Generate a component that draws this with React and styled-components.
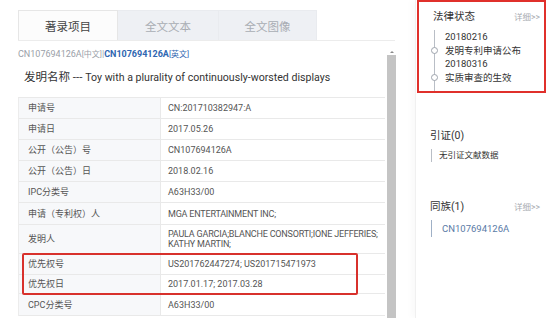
import React from "react"
import styled, { createGlobalStyle } from "styled-components"

const Global = createGlobalStyle`
  html, body {
    margin: 0;
    padding: 0;
    background: #fff;
    font-family: Roboto, "Noto Sans CJK SC", sans-serif;
    color: #555;
  }
`

const Page = styled.div`
  display: flex;
  align-items: flex-start;
  width: 556px;
  height: 318px;
  overflow: hidden;
`

const LeftCol = styled.div`
  width: 380px;
  padding: 10px 0 0 18px;
  flex-shrink: 0;
`

const Tabs = styled.div`
  display: flex;
  height: 30px;
  width: 377px;
  border-bottom: 1px solid #ececec;
`

const Tab = styled.div`
  width: ${p => p.w}px;
  display: flex;
  align-items: center;
  justify-content: center;
  font-size: 11.5px;
  color: ${p => (p.active ? "#444" : "#a9adb3")};
  background: ${p => (p.active ? "#fcfcfc" : "#eef0f4")};
  border: 1px solid ${p => (p.active ? "#e6e6e6" : "#e9ebef")};
  border-bottom: none;
  border-left: ${p => (p.active ? "1px solid #e6e6e6" : "none")};
`

const Body = styled.div`
  display: flex;
  gap: 2px;
`

const Main = styled.div`
  width: 367px;
`

const Meta = styled.div`
  padding-top: 7px;
  font-size: 9px;
  line-height: 13px;
  color: #9aa0a8;
`

const MetaLink = styled.span`
  color: #2f66b1;
  font-weight: bold;
`

const Small = styled.span`
  font-size: 8px;
  font-weight: normal;
`

const Title = styled.div`
  margin: 9px 0 0 6px;
  font-size: 11.5px;
  line-height: 15px;
  color: #333;
  height: 27px;
`

const Latin = styled.span`
  font-size: 10.6px;
`

const Table = styled.div`
  border-top: 1px solid #e9e9e9;
  border-left: 1px solid #ececec;
`

const Row = styled.div`
  display: grid;
  grid-template-columns: 142px 1fr;
  min-height: ${p => p.h || 20}px;
  border-bottom: 1px solid #e9e9e9;
  font-size: 9px;
  line-height: 10px;
`

const Label = styled.div`
  background: #f7f8fa;
  border-right: 1px solid #e9e9e9;
  padding-left: 9px;
  display: flex;
  align-items: center;
  color: #555;
`

const Value = styled.div`
  padding-left: 7px;
  display: flex;
  align-items: center;
  color: #555;
  white-space: pre;
  font-size: 9px;
  letter-spacing: ${p => (p.caps ? "-0.2px" : "0")};
`

const Priority = styled.div`
  position: relative;
  &::after {
    content: "";
    position: absolute;
    left: 3px;
    right: 27px;
    top: -1px;
    bottom: -1px;
    border: 2px solid #d8312c;
    border-radius: 2px;
    pointer-events: none;
  }
`

const Scroll = styled.div`
  width: 9px;
  margin-top: 7px;
  height: 280px;
  display: flex;
  flex-direction: column;
`

const ScrollArrow = styled.div`
  height: 7px;
  display: flex;
  align-items: center;
  justify-content: center;
  &::before {
    content: "";
    border-left: 2px solid transparent;
    border-right: 2px solid transparent;
    border-bottom: 2px solid #8a8a8a;
  }
`

const ScrollThumb = styled.div`
  flex: 1;
  background: #c4c4c4;
`

const Sidebar = styled.div`
  margin-left: 17px;
  width: 141px;
  height: 318px;
  border-left: 1px solid #f0f0f0;
  box-shadow: -4px 0 6px rgba(0, 0, 0, 0.025);
`

const StatusBox = styled.div`
  margin-left: 1px;
  width: 121px;
  height: 89px;
  border: 2px solid #e0302b;
  padding: 0 4px 0 0;
`

const Section = styled.div`
  padding: ${p => p.pad || "0"};
`

const Head = styled.div`
  display: flex;
  justify-content: space-between;
  align-items: baseline;
  padding-left: 14px;
  padding-right: ${p => (p.inBox ? "0" : "16px")};
  color: #333;
  font-size: 10.5px;
  line-height: 14px;
`

const More = styled.span`
  font-size: 8.5px;
  color: #a7abb1;
`

const Timeline = styled.div`
  margin: 6px 0 0 15px;
  border-left: 1px solid #b9bec6;
  padding: 0 0 7px 10px;
  font-size: 9.5px;
  line-height: 13.5px;
  color: #333;
`

const Event = styled.div`
  position: relative;
  &::before {
    content: "";
    position: absolute;
    left: -14px;
    top: 17px;
    width: 5px;
    height: 5px;
    border-radius: 50%;
    border: 1px solid #9ea4ad;
    background: #fff;
  }
`

const Note = styled.div`
  margin: 6px 0 0 15px;
  border-left: 1px solid ${p => (p.link ? "#9fb0c6" : "#b9bec6")};
  padding-left: ${p => (p.link ? 10 : 7)}px;
  font-size: ${p => (p.link ? 9.5 : 8.5)}px;
  line-height: ${p => (p.link ? 17 : 13)}px;
  color: ${p => (p.link ? "#5a7aa6" : "#333")};
`

const rows = [
  ["申请号", "CN:201710382947:A"],
  ["申请日", "2017.05.26"],
  ["公开（公告）号", "CN107694126A"],
  ["公开（公告）日", "2018.02.16"],
  ["IPC分类号", "A63H33/00"],
  ["申请（专利权）人", "MGA ENTERTAINMENT INC;", 21, true],
  ["发明人", "PAULA GARCIA;BLANCHE CONSORTI;IONE JEFFERIES;\nKATHY MARTIN;", 28, true],
]

export default function App() {
  return (
    <Page>
      <Global />
      <LeftCol>
        <Tabs>
          <Tab active w={98}>著录项目</Tab>
          <Tab w={100}>全文文本</Tab>
          <Tab w={97}>全文图像</Tab>
        </Tabs>
        <Body>
          <Main>
            <Meta>
              CN107694126A<Small>[中文]</Small>|
              <MetaLink>
                CN107694126A<Small>[英文]</Small>
              </MetaLink>
            </Meta>
            <Title>
              发明名称 --- <Latin>Toy with a plurality of continuously-worsted displays</Latin>
            </Title>
            <Table>
              {rows.map(([k, v, h, caps]) => (
                <Row key={k} h={h}>
                  <Label>{k}</Label>
                  <Value caps={caps}>{v}</Value>
                </Row>
              ))}
              <Priority>
                <Row>
                  <Label>优先权号</Label>
                  <Value>US201762447274; US201715471973</Value>
                </Row>
                <Row h={18}>
                  <Label>优先权日</Label>
                  <Value>2017.01.17; 2017.03.28</Value>
                </Row>
              </Priority>
              <Row h={21}>
                <Label>CPC分类号</Label>
                <Value>A63H33/00</Value>
              </Row>
            </Table>
          </Main>
          <Scroll>
            <ScrollArrow />
            <ScrollThumb />
          </Scroll>
        </Body>
      </LeftCol>
      <Sidebar>
        <StatusBox>
          <Head inBox style={{ paddingTop: 8 }}>
            法律状态<More>详细&gt;&gt;</More>
          </Head>
          <Timeline>
            <Event>
              20180216
              <br />
              发明专利申请公布
            </Event>
            <Event>
              20180316
              <br />
              实质审查的生效
            </Event>
          </Timeline>
        </StatusBox>
        <Section pad="36px 0 0 0">
          <Head>引证(0)</Head>
          <Note>无引证文献数据</Note>
        </Section>
        <Section pad="38px 0 0 0">
          <Head>
            同族(1)<More>详细&gt;&gt;</More>
          </Head>
          <Note link>CN107694126A</Note>
        </Section>
      </Sidebar>
    </Page>
  )
}
